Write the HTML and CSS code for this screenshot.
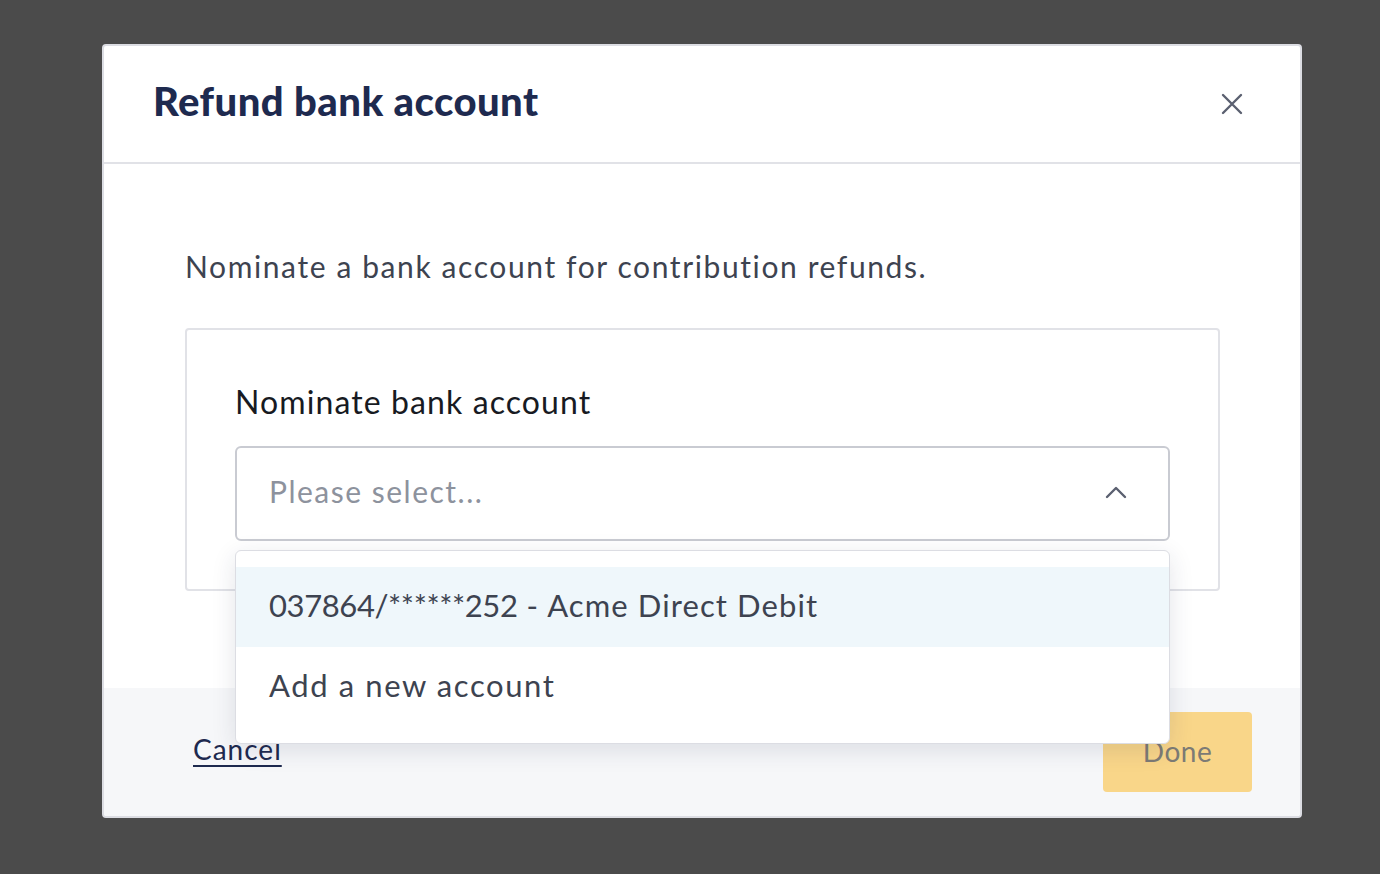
FILE: index.html
```html
<!DOCTYPE html>
<html lang="en">
<head>
<meta charset="utf-8">
<title>Refund bank account</title>
<link rel="stylesheet" href="styles.css">
</head>
<body>
<div class="backdrop">
  <div class="modal" role="dialog" aria-labelledby="modal-title">
    <header class="modal-header">
      <h1 id="modal-title" class="modal-title">Refund bank account</h1>
      <button class="close-btn" aria-label="Close">
        <svg width="22" height="22" viewBox="0 0 22 22" fill="none" stroke="currentColor" stroke-width="2.4" stroke-linecap="round">
          <path d="M2 2 L20 20 M20 2 L2 20"/>
        </svg>
      </button>
    </header>
    <div class="modal-body">
      <p class="intro">Nominate a bank account for contribution refunds.</p>
      <div class="field-card">
        <label class="field-label">Nominate bank account</label>
        <div class="select-wrap">
          <div class="select">
            <span class="placeholder">Please select...</span>
            <svg class="chevron" width="22" height="14" viewBox="0 0 22 14" fill="none" stroke="currentColor" stroke-width="2.4" stroke-linecap="round" stroke-linejoin="round">
              <path d="M2 12 L11 3 L20 12"/>
            </svg>
          </div>
          <ul class="menu">
            <li class="option active"><span class="acct-no">037864/******252</span><span class="acct-name">&nbsp;- Acme Direct Debit</span></li>
            <li class="option">Add a new account</li>
          </ul>
        </div>
      </div>
    </div>
    <footer class="modal-footer">
      <a class="cancel" href="#">Cancel</a>
      <button class="done" disabled>Done</button>
    </footer>
  </div>
</div>
</body>
</html>
```

FILE: styles.css
```css
* {
  box-sizing: border-box;
}

html, body {
  margin: 0;
  height: 100%;
}

body {
  background: #4b4b4b;
  font-family: Lato, "Noto Sans", sans-serif;
  color: #3d4350;
}

.backdrop {
  padding: 44px 78px 0 102px;
}

.modal {
  width: 1200px;
  height: 774px;
  background: #ffffff;
  border: 2px solid #dcdde3;
  border-radius: 4px;
  display: flex;
  flex-direction: column;
  overflow: visible;
}

.modal-header {
  height: 118px;
  flex: none;
  border-bottom: 2px solid #e1e2e7;
  display: flex;
  align-items: center;
  justify-content: space-between;
  padding: 0 57px 0 49px;
}

.modal-title {
  margin: 0;
  font-size: 40px;
  font-weight: 900;
  color: #1e2a4f;
  letter-spacing: 0.45px;
  position: relative;
  top: -3px;
}

.close-btn {
  background: none;
  border: 0;
  padding: 0;
  color: #5b6070;
  display: flex;
}

.modal-body {
  flex: 1;
  padding: 82px 80px 0 81px;
}

.intro {
  margin: 0 0 42px;
  font-size: 30px;
  letter-spacing: 1.6px;
  line-height: 40px;
  color: #3d4350;
}

.field-card {
  border: 2px solid #e1e2e7;
  border-radius: 4px;
  height: 263px;
  padding: 52px 48px 0 48px;
}

.field-label {
  display: block;
  font-size: 32px;
  letter-spacing: 1.1px;
  line-height: 40px;
  color: #171a22;
  margin-bottom: 24px;
}

.select-wrap {
  position: relative;
}

.select {
  height: 95px;
  border: 2px solid #c9cbd2;
  border-radius: 6px;
  display: flex;
  align-items: center;
  justify-content: space-between;
  padding: 0 41px 0 32px;
}

.placeholder {
  font-size: 30px;
  letter-spacing: 1.5px;
  color: #8d929d;
  position: relative;
  top: -3px;
}

.chevron {
  color: #5b6070;
  position: relative;
  top: -2px;
}

.menu {
  position: absolute;
  left: 0;
  right: 0;
  top: 104px;
  margin: 0;
  padding: 16px 0 16px;
  list-style: none;
  background: #ffffff;
  border: 1px solid #dcdde3;
  border-radius: 6px;
  box-shadow: 0 6px 24px rgba(30, 40, 70, 0.12);
  z-index: 2;
}

.option {
  height: 80px;
  display: flex;
  align-items: center;
  padding: 0 33px 4px;
  font-size: 31px;
  letter-spacing: 1.6px;
  color: #3d4350;
}

.acct-no {
  letter-spacing: -0.4px;
}

.acct-name {
  letter-spacing: 1.1px;
}

.option.active {
  background: #eff7fb;
}

.modal-footer {
  height: 128px;
  flex: none;
  background: #f6f7f9;
  display: flex;
  align-items: center;
  justify-content: space-between;
  padding: 0 48px 0 89px;
  border-radius: 0 0 3px 3px;
}

.cancel {
  font-size: 28px;
  letter-spacing: 1px;
  color: #1e2a4f;
  text-decoration: underline;
  text-underline-offset: 5px;
  text-decoration-thickness: 2px;
  position: relative;
  top: -3px;
}

.done {
  width: 149px;
  height: 80px;
  border: 0;
  border-radius: 4px;
  background: #f9d689;
  color: #7d7b75;
  font-family: inherit;
  font-size: 28px;
  letter-spacing: 0.5px;
  padding-bottom: 4px;
}
```
